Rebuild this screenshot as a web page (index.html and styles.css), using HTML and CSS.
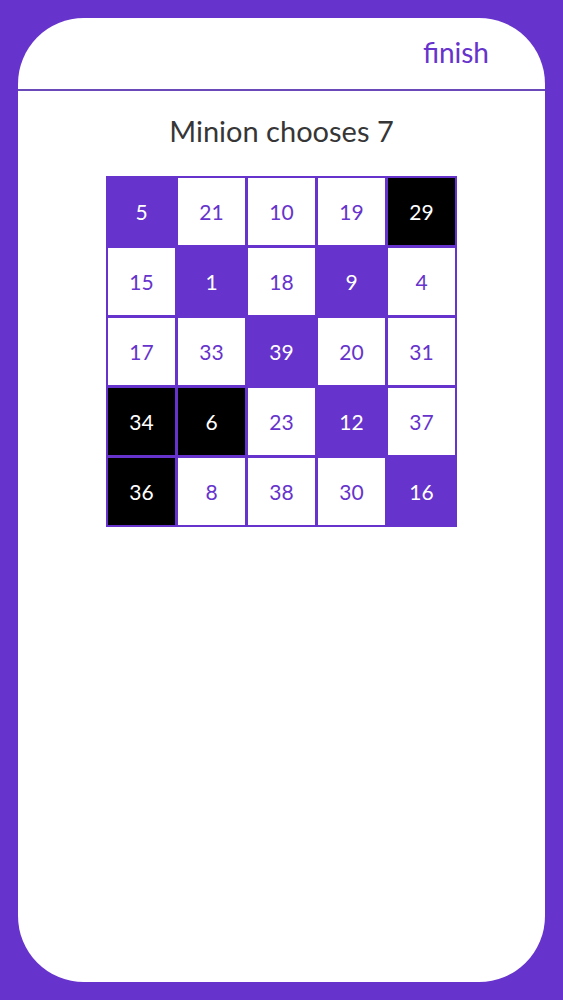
FILE: index.html
```html
<!DOCTYPE html>
<html>
<head>
<meta charset="utf-8">
<link rel="stylesheet" href="styles.css">
</head>
<body>
<div class="card">
  <div class="header"><span class="finish">finish</span></div>
  <h1 class="title">Minion chooses 7</h1>
  <div class="board">
    <div class="cell p">5</div><div class="cell w">21</div><div class="cell w">10</div><div class="cell w">19</div><div class="cell b">29</div>
    <div class="cell w">15</div><div class="cell p">1</div><div class="cell w">18</div><div class="cell p">9</div><div class="cell w">4</div>
    <div class="cell w">17</div><div class="cell w">33</div><div class="cell p">39</div><div class="cell w">20</div><div class="cell w">31</div>
    <div class="cell b">34</div><div class="cell b">6</div><div class="cell w">23</div><div class="cell p">12</div><div class="cell w">37</div>
    <div class="cell b">36</div><div class="cell w">8</div><div class="cell w">38</div><div class="cell w">30</div><div class="cell p">16</div>
  </div>
</div>
</body>
</html>
```
FILE: styles.css
```css
html, body {
  margin: 0;
  padding: 0;
}
body {
  background: #6633cc;
  font-family: Lato, "Open Sans", sans-serif;
  padding: 18px;
  box-sizing: border-box;
  height: 1000px;
}
.card {
  background: #ffffff;
  border-radius: 66px;
  height: 964px;
  display: flex;
  flex-direction: column;
  align-items: center;
}
.header {
  align-self: stretch;
  border-bottom: 2px solid #6a4ab8;
  display: flex;
  justify-content: flex-end;
  align-items: flex-start;
  padding: 17px 56px 0 0;
  height: 54px;
}
.finish {
  color: #6633cc;
  font-size: 28px;
  line-height: 34px;
}
.title {
  margin: 22px 0 0 0;
  font-weight: normal;
  font-size: 29px;
  line-height: 36px;
  color: #363636;
}
.board {
  margin-top: 27px;
  background: #6633cc;
  padding: 2px;
  display: grid;
  grid-template-columns: repeat(5, 67px);
  grid-template-rows: repeat(5, 67px);
  gap: 3px;
}
.cell {
  display: flex;
  align-items: center;
  justify-content: center;
  font-size: 21px;
}
.w { background: #ffffff; color: #6633cc; }
.p { background: #6633cc; color: #ffffff; }
.b { background: #000000; color: #ffffff; }
```
